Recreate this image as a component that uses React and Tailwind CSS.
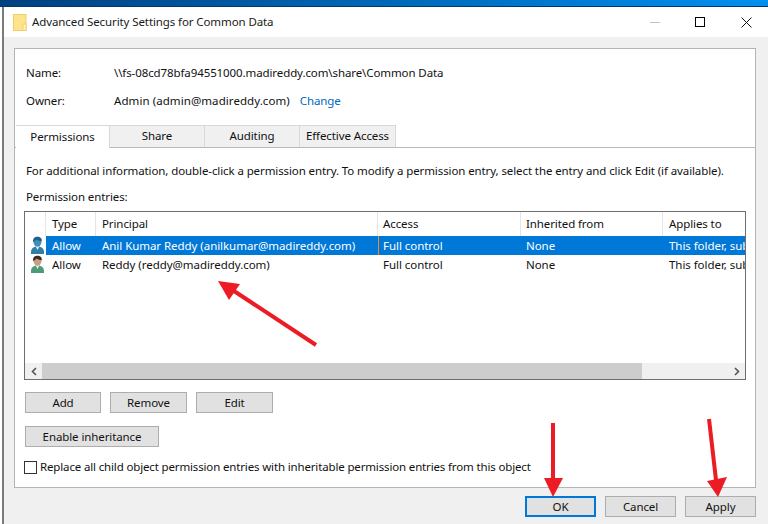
import React from "react";

function Person({ hair, body, face }) {
  return (
    <svg width="15" height="19" viewBox="0 0 15 19" className="block">
      <path d="M1 18 C0.6 12.5 3 10.5 7.5 10.5 C12 10.5 14.4 12.5 14 18 Z" fill={body} />
      <path d="M5.6 10.5 L7.5 14 L9.4 10.5 Z" fill="#dfeeea" />
      <ellipse cx="7.5" cy="6" rx="4" ry="4.6" fill={face} />
      <path d="M3.1 6 C2.7 2 5.1 0.8 7.5 0.8 C10.3 0.8 12.3 2.4 11.7 5.2 C9.5 5 7.5 4.4 6.1 3.6 C5.5 5 4.5 5.6 3.1 6 Z" fill={hair} />
    </svg>
  );
}

function Btn({ w, children, primary }) {
  return (
    <button
      className={
        "h-[21px] flex items-center justify-center bg-[#e1e1e1] text-[#111] " +
        w +
        (primary ? " border-2 border-[#0078d7]" : " border border-[#adadad]")
      }
    >
      {children}
    </button>
  );
}

function Tab({ w, active, children }) {
  return (
    <div
      className={
        "flex items-center justify-center border-[#d9d9d9] border-t border-r pb-px " +
        w +
        (active ? " h-[23px] bg-white -mb-px z-10" : " h-[22px] bg-[#f0f0f0]")
      }
    >
      {children}
    </div>
  );
}

function Row({ selected, hair, body, face, principal }) {
  return (
    <div className="flex h-[19px]">
      <div className="w-[21px] pl-[5px] shrink-0">
        <Person hair={hair} body={body} face={face} />
      </div>
      <div
        className={
          "flex flex-1 items-center min-w-0 overflow-hidden whitespace-nowrap tracking-[-0.05px] " +
          (selected ? "bg-[#0078d7] text-white" : "text-[#111]")
        }
      >
        <div className="w-[50px] pl-[6px] shrink-0">Allow</div>
        <div className="w-[282px] pl-[6px] shrink-0 h-full flex items-center">{principal}</div>
        <div className={"w-[143px] shrink-0 h-full flex items-center pl-[4px] border-l " + (selected ? "border-[#f08a24]" : "border-transparent")}>Full control</div>
        <div className="w-[142px] pl-[5px] shrink-0">None</div>
        <div className="flex-1 pl-[6px] overflow-hidden">This folder, subfolders and files</div>
      </div>
    </div>
  );
}

function Head({ w, pl = "pl-[6px]", children, last }) {
  return (
    <div className={"h-full flex items-center shrink-0 " + pl + " " + w + (last ? "" : " border-r border-[#e5e5e5]")}>
      {children}
    </div>
  );
}

export default function App() {
  return (
    <div className="relative w-[768px] h-[524px] overflow-hidden flex flex-col bg-white text-[11.5px] tracking-[-0.1px] leading-[16px] text-[#111] font-['Noto_Sans',sans-serif]">
      <div className="h-[7px] shrink-0 bg-gradient-to-r from-[#00407f] via-[#0068b8] to-[#0090f0] border-b border-[#00386e]" />
      <div className="flex-1 ml-[2px] border-l-2 border-[#7a7a7a] bg-[#f0f0f0] flex flex-col min-h-0">
        <div className="h-[30px] shrink-0 bg-white flex items-center pl-[9px]">
          <svg width="14" height="17" viewBox="0 0 14 17" className="block">
            <rect x="0.5" y="0.5" width="12.5" height="16" fill="#fde48c" stroke="#f2cf66" />
            <rect x="10" y="10" width="3" height="6.5" fill="#fff3c4" stroke="#ecc95e" strokeWidth="0.8" />
          </svg>
          <div className="ml-[5px] text-[#1a1a1a]">Advanced Security Settings for Common Data</div>
          <div className="ml-auto flex items-center">
            <div className="w-[10px] h-px bg-[#c4c4c4] mr-[35px]" />
            <div className="w-[10px] h-[10px] border border-black mr-[36px]" />
            <svg width="11" height="11" viewBox="0 0 11 11" className="block mr-[16px]">
              <path d="M0.5 0.5 L10.5 10.5 M10.5 0.5 L0.5 10.5" stroke="#111" strokeWidth="1" fill="none" />
            </svg>
          </div>
        </div>
        <div className="h-[11px] shrink-0" />
        <div className="ml-[10px] w-[742px] h-[440px] shrink-0 bg-white border border-[#b4b4b4] flex flex-col">
          <div className="flex items-center h-[16px] mt-[16px] pl-[11px]">
            <div className="w-[88px]">Name:</div>
            <div>\\fs-08cd78bfa94551000.madireddy.com\share\Common Data</div>
          </div>
          <div className="flex items-center h-[16px] mt-[12px] pl-[11px]">
            <div className="w-[88px]">Owner:</div>
            <div className="tracking-[0.07px]">Admin (admin@madireddy.com)</div>
            <div className="ml-[10px] text-[#0067c0]">Change</div>
          </div>
          <div className="flex items-end mt-[16px] pl-px border-b border-[#b9b9b9] h-[23px]">
            <Tab w="w-[94px]" active>Permissions</Tab>
            <Tab w="w-[95px]">Share</Tab>
            <Tab w="w-[95px]">Auditing</Tab>
            <Tab w="w-[96px]">Effective Access</Tab>
          </div>
          <div className="pl-[11px] mt-[15px] h-[16px] whitespace-nowrap">
            For additional information, double-click a permission entry. To modify a permission entry, select the entry and click Edit (if available).
          </div>
          <div className="pl-[11px] mt-[10px] h-[16px]">Permission entries:</div>
          <div className="ml-[9px] mt-[6px] w-[722px] h-[169px] shrink-0 border border-[#6e6e6e] flex flex-col">
            <div className="h-[24px] flex shrink-0 text-[#111]">
              <Head w="w-[21px]" />
              <Head w="w-[50px]">Type</Head>
              <Head w="w-[282px]">Principal</Head>
              <Head w="w-[143px]" pl="pl-[5px]">Access</Head>
              <Head w="w-[142px]" pl="pl-[5px]">Inherited from</Head>
              <Head w="w-[80px]" last>Applies to</Head>
            </div>
            <Row selected principal="Anil Kumar Reddy (anilkumar@madireddy.com)" hair="#1f5f8b" body="#2f7ea6" face="#3f8fb8" />
            <Row principal="Reddy (reddy@madireddy.com)" hair="#3a2a22" body="#4f9a78" face="#c79f82" />
            <div className="flex-1" />
            <div className="h-[16px] shrink-0 bg-[#f0f0f0] flex items-center">
              <div className="w-[17px] flex justify-center">
                <svg width="8" height="9" viewBox="0 0 8 9"><path d="M6 1 L2.5 4.5 L6 8" fill="none" stroke="#555" strokeWidth="1.6" /></svg>
              </div>
              <div className="w-[600px] h-full bg-[#cdcdcd]" />
              <div className="ml-auto w-[17px] flex justify-center">
                <svg width="8" height="9" viewBox="0 0 8 9"><path d="M2 1 L5.5 4.5 L2 8" fill="none" stroke="#555" strokeWidth="1.6" /></svg>
              </div>
            </div>
          </div>
          <div className="flex mt-[12px] ml-[10px] gap-[9px]">
            <Btn w="w-[76px]">Add</Btn>
            <Btn w="w-[77px]">Remove</Btn>
            <Btn w="w-[77px]">Edit</Btn>
          </div>
          <div className="flex mt-[13px] ml-[10px]">
            <Btn w="w-[134px]">Enable inheritance</Btn>
          </div>
          <div className="flex items-center mt-[13px] ml-[9px] h-[14px]">
            <div className="w-[13px] h-[13px] border border-[#333] bg-white shrink-0" />
            <div className="ml-[3px] whitespace-nowrap tracking-[-0.15px]">Replace all child object permission entries with inheritable permission entries from this object</div>
          </div>
        </div>
        <div className="flex justify-end gap-[9px] mt-[8px] mr-[12px]">
          <Btn w="w-[71px]" primary>OK</Btn>
          <Btn w="w-[71px]">Cancel</Btn>
          <Btn w="w-[71px]">Apply</Btn>
        </div>
      </div>
      <svg className="absolute left-0 top-0 pointer-events-none" width="768" height="524" viewBox="0 0 768 524">
        <g fill="#ec1c24" stroke="none">
          <path d="M218 281 L240 284 L229 300 Z" />
          <path d="M553 478 L553 423" stroke="#ec1c24" strokeWidth="4" />
          <path d="M544 478 L563 478 L553 497 Z" />
          <path d="M709 419 L716 480" stroke="#ec1c24" strokeWidth="4" />
          <path d="M707 481 L727 477 L718 497 Z" />
          <path d="M316 345 L234 291" stroke="#ec1c24" strokeWidth="4" />
        </g>
      </svg>
    </div>
  );
}
